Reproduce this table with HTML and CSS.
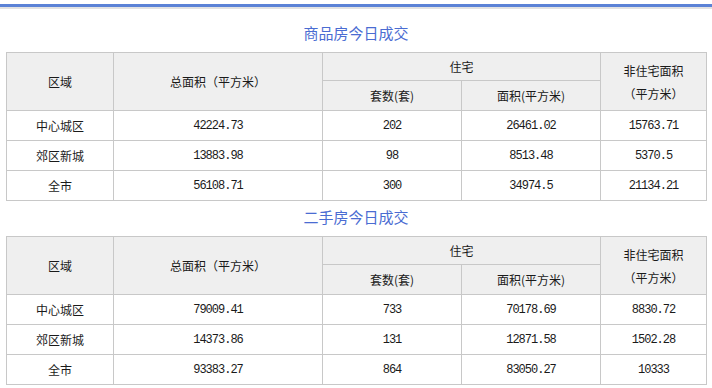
FILE: index.html
```html
<!DOCTYPE html>
<html lang="zh-CN">
<head>
  <meta charset="UTF-8" />
  <title>今日成交</title>
  <link rel="stylesheet" href="styles.css">
</head>
<body>
  <div class="topbar"></div>

  <div class="page">
    <h2 class="title">商品房今日成交</h2>
    <table class="deals">
      <colgroup>
        <col class="c-area"><col class="c-total"><col class="c-num"><col class="c-res"><col class="c-non">
      </colgroup>
      <tr class="head1">
        <th rowspan="2">区域</th>
        <th rowspan="2">总面积（平方米）</th>
        <th colspan="2">住宅</th>
        <th rowspan="2" class="two-line">非住宅面积<br>（平方米）</th>
      </tr>
      <tr class="head2">
        <th>套数(套)</th>
        <th>面积(平方米)</th>
      </tr>
      <tr><td>中心城区</td><td class="n">42224.73</td><td class="n">202</td><td class="n">26461.02</td><td class="n">15763.71</td></tr>
      <tr><td>郊区新城</td><td class="n">13883.98</td><td class="n">98</td><td class="n">8513.48</td><td class="n">5370.5</td></tr>
      <tr><td>全市</td><td class="n">56108.71</td><td class="n">300</td><td class="n">34974.5</td><td class="n">21134.21</td></tr>
    </table>

    <h2 class="title">二手房今日成交</h2>
    <table class="deals">
      <colgroup>
        <col class="c-area"><col class="c-total"><col class="c-num"><col class="c-res"><col class="c-non">
      </colgroup>
      <tr class="head1">
        <th rowspan="2">区域</th>
        <th rowspan="2">总面积（平方米）</th>
        <th colspan="2">住宅</th>
        <th rowspan="2" class="two-line">非住宅面积<br>（平方米）</th>
      </tr>
      <tr class="head2">
        <th>套数(套)</th>
        <th>面积(平方米)</th>
      </tr>
      <tr><td>中心城区</td><td class="n">79009.41</td><td class="n">733</td><td class="n">70178.69</td><td class="n">8830.72</td></tr>
      <tr><td>郊区新城</td><td class="n">14373.86</td><td class="n">131</td><td class="n">12871.58</td><td class="n">1502.28</td></tr>
      <tr><td>全市</td><td class="n">93383.27</td><td class="n">864</td><td class="n">83050.27</td><td class="n">10333</td></tr>
    </table>
  </div>
</body>
</html>
```

FILE: styles.css
```css
* { margin: 0; padding: 0; box-sizing: border-box; }
body { background: #fff; color: #1a1a1a; font-family: "Noto Sans CJK SC", "Noto Sans", sans-serif; font-size: 12px; }

.topbar { margin-top: 4px; height: 5px; border-top: 3px solid #5b82d6; background: #e2e2e2; }

.page { padding: 0 6px 0 6px; }

.title { height: 35px; line-height: 32px; padding-bottom: 3px; text-align: center; font-size: 15px; font-weight: normal; color: #4a6cd2; }
.page .title:first-child { margin-top: 8px; }

/* tables */
.deals { width: 700px; border-collapse: collapse; border: 1px solid #c4c4c4; table-layout: fixed; }
.deals th, .deals td { border: 1px solid #c8c8c8; text-align: center; font-weight: normal; padding: 0; }
.deals th { background: #efefef; }
.deals td { height: 30px; }
.deals .head1 th { height: 28px; }
.deals .head2 th { height: 30px; }
.deals .two-line { line-height: 23px; }
.deals td.n { font-family: "Liberation Mono", "DejaVu Sans Mono", monospace; font-size: 12px; letter-spacing: -1px; }

.c-area { width: 107px; }
.c-total { width: 209px; }
.c-num { width: 139px; }
.c-res { width: 139px; }
.c-non { width: 106px; }
```
